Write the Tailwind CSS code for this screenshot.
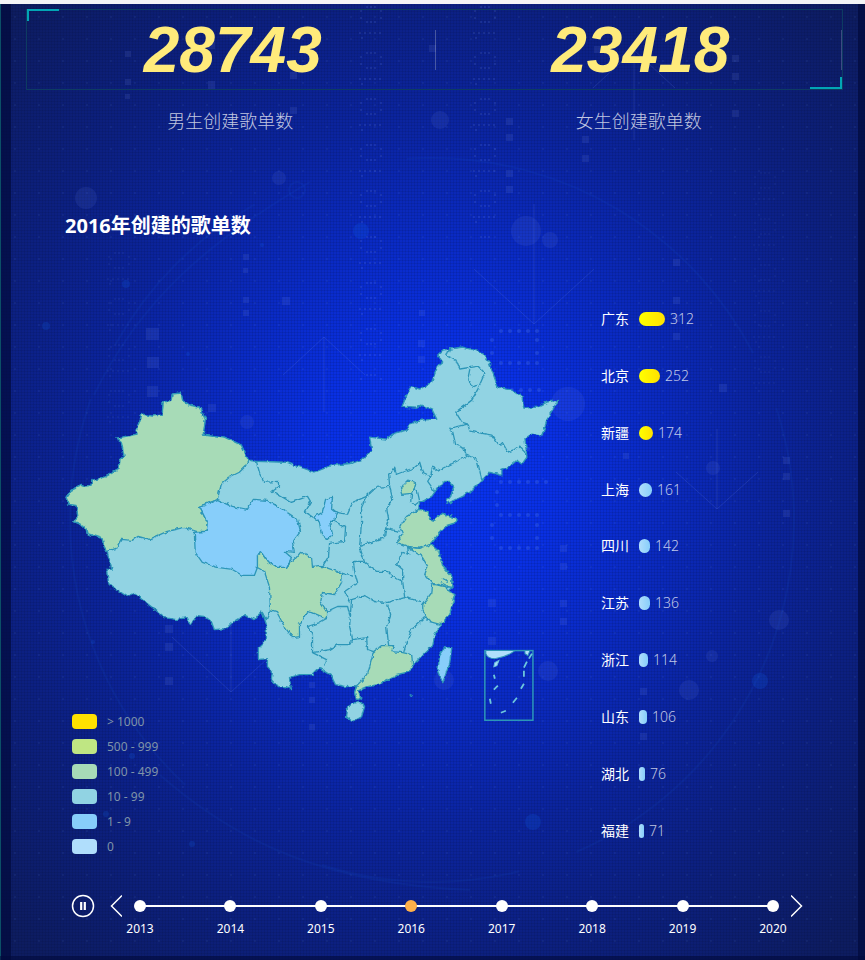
<!DOCTYPE html>
<html lang="zh-CN">
<head>
<meta charset="utf-8">
<meta name="viewport" content="width=device-width, initial-scale=1">
<title>歌单数据大屏</title>
<script src="https://cdn.jsdelivr.net/npm/@tailwindcss/browser@4"></script>
</head>
<body class="min-h-screen bg-[#06104a] font-['Noto_Sans','Noto_Sans_CJK_SC',sans-serif] text-white">
<div class="relative isolate flex min-h-screen flex-col overflow-hidden border-t-4 border-[#f3f4f6] bg-[radial-gradient(ellipse_600px_640px_at_50%_49%,#0834f4_0%,#0930e4_20%,#0a2ac2_38%,#0b249e_56%,#0c2082_74%,#0d1c60_100%)]">

  <!-- Backdrop decoration -->
  <div class="absolute inset-0 -z-10 bg-[repeating-linear-gradient(0deg,rgba(0,10,40,0.1)_0_1px,transparent_1px_3px),repeating-linear-gradient(90deg,rgba(0,10,40,0.1)_0_1px,transparent_1px_3px)]"></div>
  <svg class="absolute inset-0 -z-10 h-full w-full opacity-65" viewBox="0 4 865 956" preserveAspectRatio="xMidYMid slice" aria-hidden="true">
    <defs>
      <pattern id="dots" width="24" height="22" patternUnits="userSpaceOnUse"><circle cx="15" cy="17" r="1" fill="#6d9cff" opacity=".14"/></pattern>
      <pattern id="rings" width="28" height="46" patternUnits="userSpaceOnUse">
        <g fill="#7fa0ff" opacity=".26"><circle cx="9" cy="3" r="1"/><circle cx="13" cy="3" r="1"/><circle cx="17" cy="3" r="1"/><circle cx="3" cy="7" r="1"/><circle cx="23" cy="7" r="1"/><circle cx="3" cy="14" r="1"/><circle cx="23" cy="14" r="1"/><circle cx="9" cy="18" r="1"/><circle cx="13" cy="18" r="1"/><circle cx="17" cy="18" r="1"/><circle cx="2" cy="29" r="1"/><circle cx="7" cy="29" r="1"/><circle cx="12" cy="29" r="1"/><circle cx="17" cy="29" r="1"/><circle cx="22" cy="29" r="1"/><circle cx="4" cy="34" r="1"/></g>
      </pattern>
    </defs>
    <rect x="11" y="4" width="848" height="956" fill="url(#dots)"/>
    <rect width="28" height="380" fill="url(#rings)" transform="translate(358 4)"/>
    <rect width="28" height="235" fill="url(#rings)" transform="translate(472 4)"/>
    <rect width="26" height="180" fill="url(#rings)" opacity=".5" transform="translate(106 250)"/>
    <rect width="26" height="230" fill="url(#rings)" opacity=".4" transform="translate(752 170)"/>
    <g fill="none" stroke="#6f9bff" stroke-opacity=".3" stroke-width="4" stroke-linecap="round">
      <path stroke-dasharray="0 9" d="M501 331h37M501 363h37M512 390h30M501 449h34M501 482h46M501 515h37M501 548h37"/>
      <path stroke-dasharray="0 13" d="M492 340v20M537 340v20M492 525v20M537 525v20M497 492v14"/>
    </g>
    <g fill="#8fa7ff" fill-opacity=".17">
      <path d="M125 51h6v6h-6zM125 79h6v6h-6zM125 94h5v5h-5zM208 42h7v7h-7zM208 81h7v8h-7zM290 72h7v7h-7zM290 107h7v7h-7zM429 45h7v7h-7zM594 46h7v7h-7zM732 55h7v7h-7zM732 73h7v7h-7zM732 110h7v7h-7zM506 118h7v7h-7zM506 134h7v7h-7zM506 170h7v7h-7zM506 186h7v7h-7zM582 136h7v7h-7zM582 155h7v7h-7z"/>
      <path d="M243 254h6v6h-6zM243 268h5v5h-5zM243 297h6v6h-6zM243 310h6v6h-6zM282 297h8v8h-8zM146 328h13v12h-13zM147 357h12v11h-12zM147 386h11v11h-11zM208 404h8v8h-8zM419 310h6v6h-6zM418 340h7v7h-7zM418 356h7v7h-7zM673 259h7v7h-7zM673 297h7v7h-7zM673 315h7v7h-7zM673 333h7v7h-7zM719 384h8v8h-8zM560 545h7v7h-7zM560 563h7v7h-7zM623 453h6v6h-6zM783 457h7v7h-7zM783 473h7v7h-7zM783 510h7v7h-7zM488 599h8v8h-8zM488 637h8v8h-8zM560 600h7v7h-7zM560 618h7v7h-7zM640 688h7v7h-7zM640 733h7v7h-7zM165 625h8v8h-8zM165 643h8v8h-8zM165 677h8v8h-8zM309 682h6v6h-6zM309 697h6v6h-6zM309 724h6v6h-6z"/>
    </g>
    <g fill="#7790f0" fill-opacity=".17"><circle cx="86" cy="198" r="11"/><circle cx="440" cy="120" r="9"/><circle cx="526" cy="231" r="15"/><circle cx="550" cy="240" r="8"/><circle cx="568" cy="404" r="17"/><circle cx="279" cy="178" r="7"/><circle cx="247" cy="422" r="7"/><circle cx="713" cy="468" r="7"/><circle cx="779" cy="620" r="10"/><circle cx="548" cy="671" r="10"/><circle cx="444" cy="680" r="10"/><circle cx="689" cy="690" r="10"/><circle cx="712" cy="656" r="6"/></g>
    <g fill="#1677ff" fill-opacity=".24"><circle cx="46" cy="326" r="4"/><circle cx="126" cy="284" r="4"/><circle cx="188" cy="354" r="2"/><circle cx="262" cy="245" r="2"/><circle cx="192" cy="844" r="3"/><circle cx="132" cy="756" r="3"/><circle cx="106" cy="814" r="3"/><circle cx="361" cy="231" r="8"/><circle cx="533" cy="822" r="8"/><circle cx="760" cy="681" r="8"/><circle cx="93" cy="642" r="2"/></g>
    <g fill="none" stroke="#7d9bff" stroke-opacity=".24"><path d="M474 269l60 55 60-55M534 324v-120M283 375l41-38 41 38M324 337v75M676 472l41 37 41-37M717 509v-80M172 637l59 55 60-55M231 692v-80M593 88l41-38 41 38M634 50v90"/></g>
    <g fill="none" stroke="#287cff" stroke-opacity=".1" stroke-width="2"><circle cx="432" cy="520" r="362" stroke-dasharray="420 60 200 160"/><path d="M94 395C140 300 210 240 310 182M160 775C240 845 330 884 470 890"/><circle cx="297" cy="190" r="8"/></g>
  </svg>
  <div class="absolute inset-y-0 left-0 -z-10 w-[11px] border-l border-[#0b4f66] bg-[#010a3c]/70"></div>
  <div class="absolute inset-y-0 right-0 -z-10 w-[7px] bg-[#010a3c]/70"></div>
  <div class="absolute inset-x-0 bottom-0 -z-10 h-1 bg-[#010a3c]/60"></div>

  <!-- Totals -->
  <header class="mt-[5px] pr-[22px] pl-[26px]">
    <div class="relative grid h-[81px] grid-cols-2 items-center border border-[#0d3b62]">
      <span class="absolute -top-px left-0 h-3 w-8 border-t-2 border-l-2 border-[#02a6b5]"></span>
      <span class="absolute right-0 bottom-0 h-3 w-8 border-r-2 border-b-2 border-[#02a6b5]"></span>
      <span class="absolute top-5 left-1/2 h-10 w-px bg-white/25"></span>
      <span class="absolute top-5 right-0 h-10 w-px bg-white/20"></span>
      <p class="pl-1 text-center font-['Liberation_Sans',sans-serif] text-[64px] leading-[78px] font-bold text-[#ffeb7b] italic">28743</p>
      <p class="pl-1 text-center font-['Liberation_Sans',sans-serif] text-[64px] leading-[78px] font-bold text-[#ffeb7b] italic">23418</p>
    </div>
    <div class="mt-[19px] grid grid-cols-2 text-center text-lg leading-6 font-light text-white/75">
      <p>男生创建歌单数</p>
      <p>女生创建歌单数</p>
    </div>
  </header>

  <main class="flex flex-col pl-[60px]">
    <h1 class="mt-[81px] pl-[5px] text-xl leading-6 font-bold">2016年创建的歌单数</h1>

    <div class="mt-[71px] grid grid-cols-[minmax(0,1fr)_264px]">
      <section class="pt-[30px] pr-10" aria-label="地图">
        <svg class="block w-full" viewBox="61 340 500 390" role="img" aria-label="各省创建的歌单数">
          <defs>
            <filter id="coast" x="-5%" y="-5%" width="110%" height="110%" color-interpolation-filters="sRGB">
              <feTurbulence type="fractalNoise" baseFrequency=".2" numOctaves="2" seed="4" result="n"/>
              <feDisplacementMap in="SourceGraphic" in2="n" scale="4" xChannelSelector="R" yChannelSelector="G"/>
            </filter>
          </defs>
          <g filter="url(#coast)" stroke="#2c96b8" stroke-width="1.3" stroke-linejoin="round">
            <path fill="#91d3e3" d="M67 498L72 491 83 486 85 487 92 486 93 481 102 479 120 469 121 460 125 457 122 442 118 439 138 435 137 431 143 415 153 417 163 416 164 403 172 401 173 395 181 394 182 400 190 406 200 408 206 420 204 435 225 438 242 446 249 461 257 462 287 463 315 473 333 466 353 464 363 460 372 451 370 438 387 440 395 434 407 431 410 425 422 421 437 420 432 410 422 406 417 409 402 408 411 387 420 390 432 383 438 367 443 363 438 356 443 351 463 348 482 353 489 363 498 388 512 391 522 398 524 409 537 408 547 403 558 401 553 410 548 418 542 437 532 435 525 439 527 458 522 465 517 461 510 467 502 470 502 476 490 473 480 483 470 493 448 504 447 502 451 497 454 487 450 482 445 482 437 490 432 497 423 502 420 502 419 510 428 512 430 520 435 521 443 514 457 519 457 523 447 526 440 533 431 545 439 552 443 567 452 577 452 588 448 592 455 595 453 602 450 615 441 625 435 635 433 645 423 655 413 666 410 672 397 675 387 681 378 685 368 687 359 691 361 698 357 701 355 693 357 686 347 687 336 685 331 675 320 668 313 675 300 675 290 678 292 690 287 687 278 687 272 680 273 672 268 667 268 659 259 660 259 648 267 640 267 625 263 613 259 615 255 620 245 616 232 624 227 629 215 630 212 622 207 618 197 617 191 626 188 618 177 620 166 618 152 607 135 594 128 597 110 585 107 570 113 570 108 552 105 547 103 539 88 534 86 527 75 522 79 518 77 506 70 505Z"/>
            <g fill="#a7dbb7">
              <path d="M67 498L72 491 83 486 85 487 92 486 93 481 102 479 120 469 121 460 125 457 122 442 118 439 138 435 137 431 143 415 153 417 163 416 164 403 172 401 173 395 181 394 182 400 190 406 200 408 206 420 204 435 225 438 242 446 249 461 246 467 240 473 230 478 222 485 218 500 200 507 204 515 208 523 207 532 197 532 185 528 168 532 150 540 139 537 133 541 122 540 117 549 108 552 105 547 103 539 88 534 86 527 75 522 79 518 77 506 70 505Z"/>
              <path d="M262 553L268 562 277 568 287 568 292 562 297 558 301 553 312 558 313 568 323 567 343 574 342 583 335 595 323 593 321 603 327 612 327 619 313 613 308 612 300 625 300 637 293 638 285 627 277 612 271 610 270 587 265 572 258 568 258 555Z"/>
              <path d="M401 491L404 486 409 481 417 485 414 490 412 494 402 495Z"/>
              <path d="M419 510L428 512 430 520 435 521 443 514 457 519 457 523 447 526 440 533 431 545 420 549 408 547 397 543 403 535 400 527 407 517Z"/>
              <path d="M431 545L439 552 443 567 452 577 452 588 446 587 433 584 425 575 428 567 422 557 408 548 420 549Z"/>
              <path d="M433 585L446 587 448 592 455 595 453 602 450 615 441 625 430 622 423 610 423 605 432 593Z"/>
              <path d="M382 646L394 646 392 652 403 653 412 655 413 666 410 672 397 675 387 681 378 685 368 687 359 691 361 698 357 701 355 693 357 686 368 675 374 652Z"/>
            </g>
            <g fill="#87cefa">
              <path d="M200 507L218 500 233 507 248 510 254 500 268 501 280 508 298 520 301 532 293 543 295 553 285 552 292 558 287 568 277 568 268 562 262 553 258 555 258 568 255 576 243 576 233 570 218 568 203 563 196 553 195 533 207 532 208 523 204 515Z"/>
              <path d="M314 518L323 513 326 500 333 498 332 509 337 513 335 522 330 522 333 535 328 540 322 535 320 523Z"/>
              <path d="M445 648L452 648 450 663 443 683 438 672 440 655Z"/>
            </g>
            <path fill="#91d3e3" d="M348 707L355 703 363 703 365 707 362 717 353 722 347 717Z"/>
            <g fill="none">
              <path d="M257 462L260 473 265 483 279 482 279 488 273 492 292 503 308 497 311 502 305 512 314 518M337 513L348 515 353 503 367 497 377 488 390 487 389 475 395 469 397 475 413 469 420 463 423 473 431 477 433 467 437 472 447 467 467 457 464 449 456 446 453 433 450 429 468 425"/>
              <path d="M468 425L462 423 456 413 472 401 478 390 485 374 478 367 460 370 457 362 447 357 450 349M470 370L468 380 473 388 477 386M468 425L470 432 492 436 500 447 503 444 508 453 520 448 527 455M467 455L477 460 482 480M431 477L428 482 435 492"/>
              <path d="M367 497L362 508 362 523 360 547 365 563 377 572 388 572 393 577 403 582 403 570 397 565 403 553 409 555 408 548M390 487L393 500 387 508 389 520 386 529 385 538 360 547M386 529L400 532M414 490L418 493 420 502 415 506 411 502 412 494"/>
              <path d="M365 563L354 563 355 572 358 583 345 592 350 602M343 574L353 577M403 582L405 598M352 600L365 596 375 602 387 603 405 598 422 602M388 605L391 615 387 627 389 646M352 600L350 627 353 640 367 638 368 650 374 652"/>
              <path d="M350 615L348 607 338 607 327 612M327 619L320 623 308 627 313 635 313 653 330 650 338 645 350 645 353 640M313 653L327 660 325 667M430 620L425 618 412 630 407 642 404 653M335 522L346 528 345 542 330 544 329 557 323 567M271 610L267 620 262 612"/>
            </g>
            <path d="M410 695l3 1M443 579l6 3M441 583l6 3"/>
          </g>
          <g stroke="#2c96b8">
            <rect x="485" y="651" width="48" height="69.500" fill="none" stroke-width="1.500"/>
            <path fill="#b0defc" d="M486 651h29c-6 5-13 7-20 8-5 0-8-2-9-5zM525 651h5l-2 5-3-2z"/>
            <path fill="none" stroke="#6cc6dd" stroke-width="1.800" d="M494 675l1 4M494 690l4-4M490 699l1 5M501 713l5-2M513 703l4-5M521 689l3-5M524 677v-6M524 668l3-6M529 659l3-5"/>
            <path fill="#b0defc" stroke="#6cc6dd" d="M494 667l1-4 4-2-2 5z"/>
          </g>
        </svg>

        <ul id="legend" class="relative -mt-4 ml-3 flex w-max flex-col gap-[10px] text-xs leading-[15px] text-[#7f93a8]"></ul>
      </section>

      <section class="pb-[13px]" aria-label="地区排行">
        <ol id="ranking" class="flex h-full flex-col justify-between"></ol>
      </section>
    </div>
  </main>

  <!-- Year player -->
  <nav class="mt-10 mb-5 flex items-start pr-[62px] pl-[71px]" aria-label="年份">
    <button type="button" aria-label="暂停">
      <svg class="block h-6 w-6" viewBox="0 0 24 24" fill="none" stroke="#fff"><circle cx="12" cy="12" r="10.500" stroke-width="1.500"/><path stroke-width="2.200" d="M10.200 8v8M13.800 8v8"/></svg>
    </button>
    <button type="button" class="ml-[15px]" aria-label="上一年">
      <svg class="block h-6 w-3" viewBox="0 0 12 24" fill="none" stroke="#fff" stroke-width="1.500"><path d="M12 1.500L1.500 12 12 22.500"/></svg>
    </button>
    <div class="relative mx-3 flex-1">
      <div class="absolute inset-x-1 top-[11px] h-[2px] bg-white"></div>
      <div id="years" class="relative flex justify-between"></div>
    </div>
    <button type="button" aria-label="下一年">
      <svg class="block h-6 w-3" viewBox="0 0 12 24" fill="none" stroke="#fff" stroke-width="1.500"><path d="M0 1.500L10.500 12 0 22.500"/></svg>
    </button>
  </nav>
</div>

<script>
  const legend = [["#ffe100","> 1000"],["#bfe683","500 - 999"],["#a7dbb7","100 - 499"],["#91d3e3","10 - 99"],["#87cefa","1 - 9"],["#b0defc","0"]];
  document.getElementById("legend").innerHTML = legend.map(([c, t]) =>
    `<li class="flex items-center gap-[10px]"><span class="h-[15px] w-[25px] rounded" style="background:${c}"></span>${t}</li>`).join("");

  const ranking = [["广东",312],["北京",252],["新疆",174],["上海",161],["四川",142],["江苏",136],["浙江",114],["山东",106],["湖北",76],["福建",71]];
  document.getElementById("ranking").innerHTML = ranking.map(([name, n], i) =>
    `<li class="flex h-5 items-center text-sm leading-5"><span class="w-7">${name}</span><span class="ml-[10px] h-[14px] rounded-full bg-gradient-to-r ${i < 3 ? "from-[#ffff00] to-[#ffe100]" : "from-[#b0defc] to-[#87cefa]"}" style="width:${Math.floor(n / 12)}px"></span><span class="ml-[5px] font-light text-white/75">${n}</span></li>`).join("");

  document.getElementById("years").innerHTML = [2013,2014,2015,2016,2017,2018,2019,2020].map(y =>
    `<button type="button" class="flex w-3 flex-col items-center text-xs leading-4"><span class="my-[6px] h-3 w-3 shrink-0 rounded-full ${y === 2016 ? "bg-[#ffb04a]" : "bg-white"}"></span><span class="mt-[3px]">${y}</span></button>`).join("");
</script>
</body>
</html>
